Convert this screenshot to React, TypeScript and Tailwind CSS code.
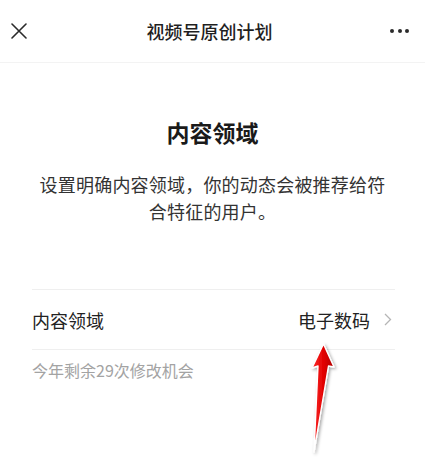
import React from "react";

const font = { fontFamily: '"Noto Sans CJK SC", "Noto Sans", sans-serif' };

export default function App() {
  return (
    <div className="relative w-[425px] h-[474px] bg-white overflow-hidden" style={font}>
      {/* header */}
      <div className="h-[63px] flex items-center justify-between border-b border-[#f3f3f3] pl-[11px] pr-[16px]">
        <svg width="16" height="16" viewBox="0 0 16 16" className="block">
          <path d="M1 1L15 15M15 1L1 15" stroke="#2b2b2b" strokeWidth="1.6" strokeLinecap="round" />
        </svg>
        <div className="pl-[2px] text-[18px] leading-[24px] font-medium text-[#1f1f1f]">视频号原创计划</div>
        <div className="flex items-center gap-[3.5px]">
          <span className="block w-[4px] h-[4px] rounded-full bg-[#2b2b2b]" />
          <span className="block w-[4px] h-[4px] rounded-full bg-[#2b2b2b]" />
          <span className="block w-[4px] h-[4px] rounded-full bg-[#2b2b2b]" />
        </div>
      </div>

      {/* title */}
      <div className="mt-[53px] text-center text-[23px] leading-[32px] font-bold text-[#1a1a1a]">内容领域</div>

      {/* description */}
      <div className="mt-[23px] px-[38px] text-center text-[18px] leading-[26.5px] tracking-[0.2px] text-[#333333]">
        设置明确内容领域，你的动态会被推荐给符合特征的用户。
      </div>

      {/* row */}
      <div className="mt-[65px] ml-[32px] mr-[30px]">
        <div className="h-[61px] flex items-center justify-between border-t border-b border-[#efefef]">
          <span className="text-[18px] leading-[24px] text-[#222222]">内容领域</span>
          <div className="flex items-center gap-[14px] pr-[3px]">
            <span className="text-[18px] leading-[24px] text-[#222222]">电子数码</span>
            <svg width="8" height="13" viewBox="0 0 8 13" className="block">
              <path d="M1 1L6.5 6.5L1 12" fill="none" stroke="#b5b5b5" strokeWidth="1.3" />
            </svg>
          </div>
        </div>
        <div className="mt-[10px] text-[16px] leading-[20px] text-[#a3a3a3]">今年剩余29次修改机会</div>
      </div>

      {/* red annotation arrow */}
      <svg className="absolute left-0 top-0 pointer-events-none" width="425" height="474" viewBox="0 0 425 474">
        <defs>
          <linearGradient id="ag" x1="0" y1="0" x2="1" y2="0">
            <stop offset="0" stopColor="#ff2a2a" />
            <stop offset="0.55" stopColor="#e00000" />
            <stop offset="1" stopColor="#b00000" />
          </linearGradient>
          <filter id="sh" x="-50%" y="-10%" width="200%" height="120%">
            <feDropShadow dx="1.5" dy="1.5" stdDeviation="1.5" floodColor="#000" floodOpacity="0.35" />
          </filter>
        </defs>
        <path
          d="M323.5 344 L334 367 L328.5 366 L314 452 L318 366 L312 368 Z"
          fill="url(#ag)"
          stroke="#ffffff"
          strokeWidth="1.4"
          strokeLinejoin="round"
          filter="url(#sh)"
        />
      </svg>
    </div>
  );
}
